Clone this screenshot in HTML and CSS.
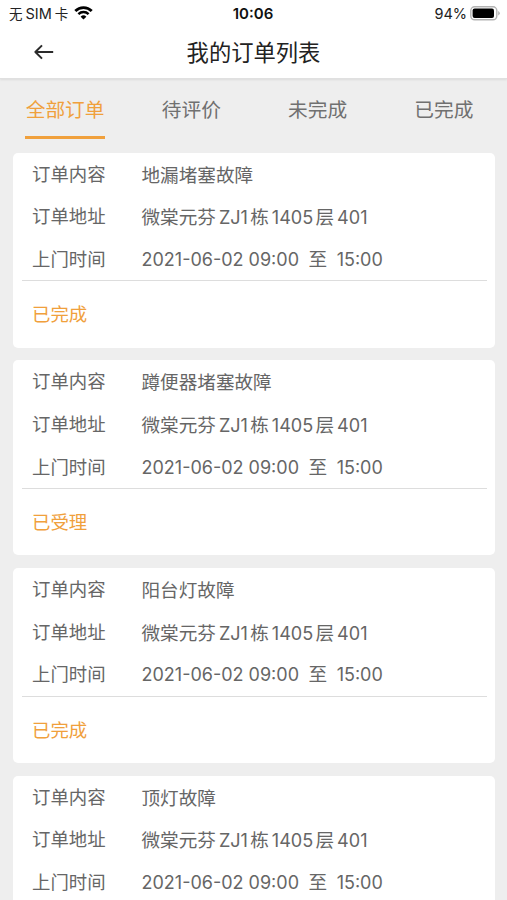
FILE: index.html
```html
<!DOCTYPE html>
<html lang="zh-CN">
<head>
    <meta charset="UTF-8">
    <meta name="viewport" content="width=device-width, initial-scale=1.0">
    <title>我的订单列表</title>
    <link rel="stylesheet" href="styles.css">
</head>
<body>
    <header class="header">
        <div class="status-bar">
            <div class="carrier">
                <span class="carrier-name">无<span class="sim">SIM</span>卡</span>
                <svg class="wifi" width="19" height="14" viewBox="0 0 19 14">
                    <path d="M1.3 5a11.6 11.6 0 0 1 16.4 0" fill="none" stroke="#000" stroke-width="2.8"/>
                    <path d="M4.4 8.1a7.3 7.3 0 0 1 10.2 0" fill="none" stroke="#000" stroke-width="2.4"/>
                    <path d="M9.5 13.6L6.6 10.7a4.2 4.2 0 0 1 5.8 0z"/>
                </svg>
            </div>
            <div class="clock">10:06</div>
            <div class="power">
                <span>94%</span>
                <svg width="30" height="15" viewBox="0 0 30 15">
                    <rect x=".8" y=".8" width="26" height="13" rx="3.8" fill="#fff" stroke="#b3b3b3" stroke-width="1.4"/>
                    <rect x="2.6" y="2.6" width="21.4" height="9.4" rx="2"/>
                    <path d="M28.2 5v4.6q1.6-.8 1.6-2.3T28.2 5z" fill="#b3b3b3"/>
                </svg>
            </div>
        </div>
        <div class="nav-bar">
            <svg class="back" width="20" height="16" viewBox="0 0 20 16">
                <path d="M8 1.4L1.4 8 8 14.6M1.4 8h17.8" fill="none" stroke="#2b2b2b" stroke-width="2" stroke-linejoin="round"/>
            </svg>
            <h1>我的订单列表</h1>
        </div>
    </header>

    <nav class="tabs">
        <a class="tab active">全部订单</a>
        <a class="tab">待评价</a>
        <a class="tab">未完成</a>
        <a class="tab">已完成</a>
    </nav>

    <main class="orders">
        <section class="card">
            <div class="details">
                <div class="row"><span class="label">订单内容</span><span>地漏堵塞故障</span></div>
                <div class="row"><span class="label">订单地址</span><span class="address">微棠元芬<b>ZJ1</b>栋<b>1405</b>层<b>401</b></span></div>
                <div class="row"><span class="label">上门时间</span><span class="time">2021-06-02 09:00<i>至</i>15:00</span></div>
            </div>
            <div class="status">已完成</div>
        </section>
        <section class="card">
            <div class="details">
                <div class="row"><span class="label">订单内容</span><span>蹲便器堵塞故障</span></div>
                <div class="row"><span class="label">订单地址</span><span class="address">微棠元芬<b>ZJ1</b>栋<b>1405</b>层<b>401</b></span></div>
                <div class="row"><span class="label">上门时间</span><span class="time">2021-06-02 09:00<i>至</i>15:00</span></div>
            </div>
            <div class="status">已受理</div>
        </section>
        <section class="card">
            <div class="details">
                <div class="row"><span class="label">订单内容</span><span>阳台灯故障</span></div>
                <div class="row"><span class="label">订单地址</span><span class="address">微棠元芬<b>ZJ1</b>栋<b>1405</b>层<b>401</b></span></div>
                <div class="row"><span class="label">上门时间</span><span class="time">2021-06-02 09:00<i>至</i>15:00</span></div>
            </div>
            <div class="status">已完成</div>
        </section>
        <section class="card last">
            <div class="details">
                <div class="row"><span class="label">订单内容</span><span>顶灯故障</span></div>
                <div class="row"><span class="label">订单地址</span><span class="address">微棠元芬<b>ZJ1</b>栋<b>1405</b>层<b>401</b></span></div>
                <div class="row"><span class="label">上门时间</span><span class="time">2021-06-02 09:00<i>至</i>15:00</span></div>
            </div>
        </section>
    </main>
</body>
</html>
```
FILE: styles.css
```css
* {
    box-sizing: border-box;
}

body {
    display: flex;
    flex-direction: column;
    margin: 0;
    height: 900px;
    overflow: hidden;
    background: #eee;
    color: #666;
    font-family: "Noto Sans CJK SC", sans-serif;
}

.header {
    height: 79px;
    flex-shrink: 0;
    background: #fff;
    border-bottom: 1px solid #e0e0e0;
    box-shadow: 0 1px 2px rgba(0, 0, 0, 0.08);
}

.status-bar {
    display: grid;
    grid-template-columns: 1fr auto 1fr;
    align-items: center;
    height: 27px;
    padding: 0 7px 0 9px;
    color: #222;
    font-size: 13.5px;
    line-height: 27px;
}

.carrier,
.power {
    display: flex;
    align-items: center;
}

.carrier {
    gap: 6px;
}

.wifi {
    margin-top: -2px;
}

.sim {
    margin: 0 3px;
    font-family: Inter, sans-serif;
    font-size: 14.5px;
}

.clock {
    margin-left: -3px;
    color: #111;
    font-family: Inter, sans-serif;
    font-weight: 600;
    font-size: 15px;
}

.power {
    justify-content: flex-end;
    gap: 3px;
    font-family: Inter, sans-serif;
    font-size: 14.5px;
}

.power svg {
    margin-top: -1px;
}

.nav-bar {
    display: grid;
    grid-template-columns: 1fr auto 1fr;
    align-items: center;
    height: 50px;
    padding: 0 34px;
}

h1 {
    margin: 0;
    color: #222;
    font-weight: 400;
    font-size: 22.3px;
    line-height: 46px;
    margin-bottom: 3px;
}

.tabs {
    display: flex;
    height: 60px;
    flex-shrink: 0;
    color: #707070;
}

.tab {
    display: flex;
    justify-content: center;
    flex: 1;
    font-size: 19.7px;
    line-height: 60px;
}

.tab.active {
    padding-left: 2px;
    color: #f0a03c;
}

.tab.active::after {
    content: "";
    width: 80px;
    height: 3px;
    margin: 57px 0 0 -80px;
    background: #f0a03c;
}

.orders {
    display: flex;
    flex-direction: column;
    flex: 1;
    min-height: 0;
    gap: 12.4px;
    padding: 13.5px 12.5px 0 13px;
}

.card {
    height: 195.3px;
    flex-shrink: 0;
    padding: 0 8px 0 9px;
    background: #fff;
    border-radius: 5px;
    font-size: 18.6px;
}

.card.last {
    height: auto;
    flex: 1;
    min-height: 0;
    overflow: hidden;
    border-radius: 5px 5px 0 0;
}

.details {
    height: 128.8px;
    border-bottom: 1px solid #ddd;
}

.row {
    display: flex;
    height: 42.7px;
    padding-left: 10px;
    line-height: 41.6px;
    white-space: nowrap;
}

.label {
    width: 109.5px;
    font-size: 18.4px;
}

/* latin and digits sit between the characters with a small gap */
.address b {
    margin: 0 2.2px 0 3px;
    font-family: Inter, sans-serif;
    font-weight: 400;
    font-size: 18.1px;
}

.time {
    font-family: Inter, "Noto Sans CJK SC", sans-serif;
    font-size: 18px;
    line-height: 42.7px;
}

.time i {
    margin: 0 9.5px;
    font-style: normal;
    font-size: 18.6px;
}

.status {
    padding-left: 10px;
    color: #f0a03c;
    font-size: 18.4px;
    line-height: 65px;
}
```
